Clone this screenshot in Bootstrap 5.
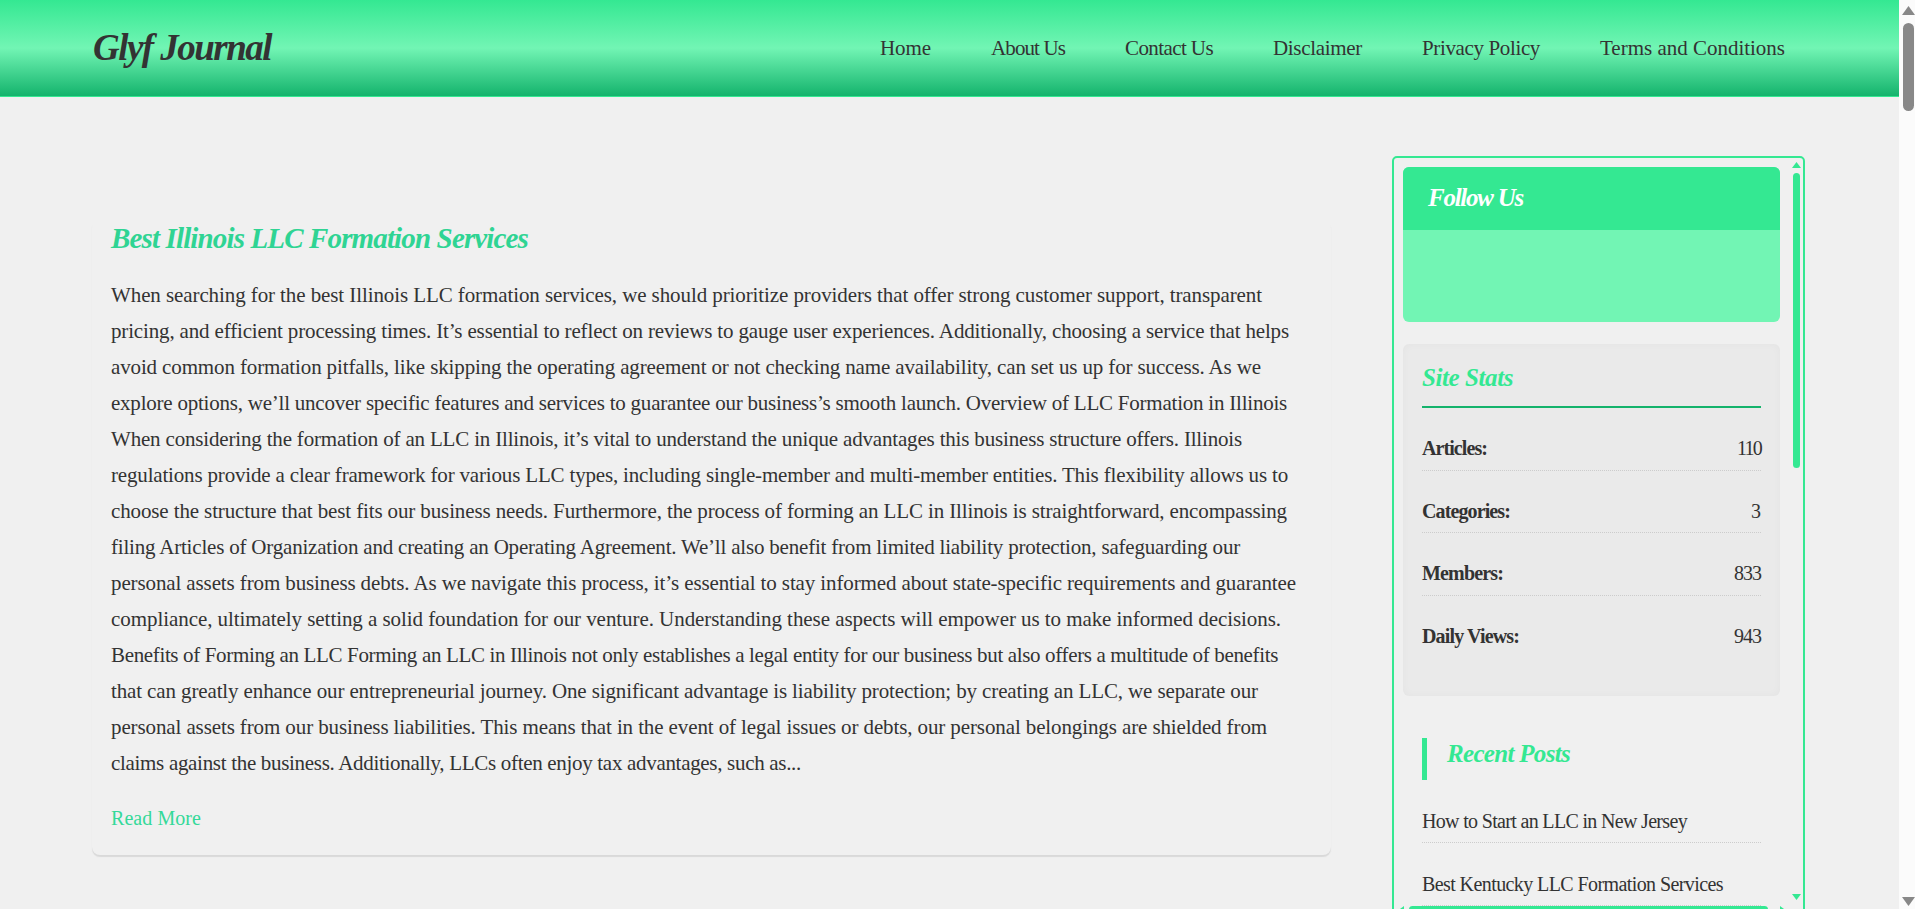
<!DOCTYPE html>
<html>
<head>
    <title>Glyf Journal</title>
    <link rel="stylesheet" href="https://cdn.jsdelivr.net/npm/bootstrap@5.3.0/dist/css/bootstrap.min.css">
    <style>
        html, body { height: 100%; overflow: hidden; }
        body {
            background: #f0f0f0;
            color: #333;
            font-family: "Liberation Serif", serif;
        }
        .fit-text { display: inline-block; white-space: nowrap; }

        /* page scrollbar, drawn because the browser hides the real one */
        .page-bar {
            position: fixed;
            top: 0;
            right: 0;
            bottom: 0;
            width: 16px;
            background: #fbfbfb;
        }
        .page-bar-thumb {
            position: absolute;
            top: 23px;
            right: 1px;
            width: 11px;
            height: 88px;
            background: #888;
            border-radius: 6px;
        }
        .page-bar-up, .page-bar-down { position: absolute; right: 0; display: block; }
        .page-bar-up { top: 6px; }
        .page-bar-down { top: 897px; }

        .site-head {
            height: 97px;
            padding: 0 130px 0 93px;
            background: linear-gradient(#34e892, #72f5b4 50%, #14b36c);
            border-bottom: 1px solid #34e892;
        }
        .site-logo {
            font-size: 37px;
            font-weight: 700;
            font-style: italic;
            color: #333;
            text-decoration: none;
        }
        .head-links { gap: 60px; padding-top: 2px; }
        .head-links a {
            font-size: 21px;
            color: #333;
            text-decoration: none;
        }

        .page-wrap { padding: 59px 95px 0 92px; gap: 61px; }
        .post-col { width: 1239px; padding-top: 64px; }
        .post-item {
            padding: 0 19px 23px;
            border-radius: 8px;
            box-shadow: 0 2px 1px #d9d9d9;
        }
        .post-title {
            font-size: 29px;
            line-height: 36px;
            font-weight: 700;
            font-style: italic;
            color: #2fd493;
            margin-bottom: 21px;
        }
        .post-text {
            font-size: 21px;
            line-height: 36px;
            margin-bottom: 25px;
        }
        .post-line { display: block; white-space: nowrap; width: fit-content; }
        .post-more { font-size: 20px; line-height: 24px; color: #34d999; text-decoration: none; }

        .side-col {
            position: relative;
            width: 413px;
            height: 770px;
            flex: none;
            padding: 9px 0 0 9px;
            overflow: hidden;
            border: 2px solid #34e892;
            border-radius: 5px;
        }
        .side-thumb-y, .side-thumb-x { position: absolute; background: #34e892; border-radius: 4px; }
        .side-thumb-y { left: 399px; top: 15px; width: 7px; height: 295px; }
        .side-thumb-x { left: 15px; top: 748px; width: 359px; height: 7px; }
        .side-arrow { position: absolute; display: block; }

        .follow-box { width: 377px; background: #72f5b4; border-radius: 6px; overflow: hidden; margin-bottom: 22px; }
        .follow-head {
            height: 63px;
            padding: 0 25px;
            line-height: 61px;
            background: #34e892;
            color: #fff;
            font-size: 25px;
            font-weight: 700;
            font-style: italic;
        }
        .follow-body { height: 92px; }

        .stats-box {
            width: 377px;
            height: 352px;
            padding: 18px 19px 0;
            background: #eaeaea;
            border-radius: 6px;
            box-shadow: inset 0 0 8px rgba(0,0,0,.03);
            margin-bottom: 42px;
        }
        .stats-title {
            font-size: 25px;
            line-height: 32px;
            font-weight: 700;
            font-style: italic;
            color: #34e892;
            padding-bottom: 12px;
            margin: 0;
            border-bottom: 2px solid #14b36c;
        }
        .stats-row {
            height: 62.7px;
            padding-top: 24px;
            line-height: 32px;
            font-size: 20px;
            border-bottom: 1px dotted #ccc;
        }
        .stats-row:last-child { border-bottom: 0; }

        .recent-box { width: 377px; padding: 0 19px; }
        .recent-title {
            height: 42px;
            margin: 0 0 25px;
            padding-left: 20px;
            border-left: 5px solid #34e892;
            font-size: 25px;
            line-height: 32px;
            font-weight: 700;
            font-style: italic;
            color: #34e892;
        }
        .recent-row {
            display: block;
            height: 38px;
            margin-bottom: 25px;
            line-height: 32px;
            font-size: 20px;
            color: #333;
            text-decoration: none;
            border-bottom: 1px dotted #ccc;
        }
    </style>
</head>
<body>
    <header class="site-head d-flex align-items-center justify-content-between">
        <a class="site-logo fit-text" data-w="178" href="#">Glyf Journal</a>
        <nav class="head-links d-flex">
            <a class="fit-text" data-w="51" href="#">Home</a>
            <a class="fit-text" data-w="74" href="#">About Us</a>
            <a class="fit-text" data-w="88" href="#">Contact Us</a>
            <a class="fit-text" data-w="89" href="#">Disclaimer</a>
            <a class="fit-text" data-w="118" href="#">Privacy Policy</a>
            <a class="fit-text" data-w="185" href="#">Terms and Conditions</a>
        </nav>
    </header>

    <div class="page-wrap d-flex align-items-start">
        <main class="post-col">
            <article class="post-item">
                <h2 class="post-title"><span class="fit-text" data-w="417">Best Illinois LLC Formation Services</span></h2>
                <p class="post-text">
                    <span class="post-line" data-w="1151">When searching for the best Illinois LLC formation services, we should prioritize providers that offer strong customer support, transparent</span>
                    <span class="post-line" data-w="1178">pricing, and efficient processing times. It’s essential to reflect on reviews to gauge user experiences. Additionally, choosing a service that helps</span>
                    <span class="post-line" data-w="1150">avoid common formation pitfalls, like skipping the operating agreement or not checking name availability, can set us up for success. As we</span>
                    <span class="post-line" data-w="1176">explore options, we’ll uncover specific features and services to guarantee our business’s smooth launch. Overview of LLC Formation in Illinois</span>
                    <span class="post-line" data-w="1131">When considering the formation of an LLC in Illinois, it’s vital to understand the unique advantages this business structure offers. Illinois</span>
                    <span class="post-line" data-w="1177">regulations provide a clear framework for various LLC types, including single-member and multi-member entities. This flexibility allows us to</span>
                    <span class="post-line" data-w="1176">choose the structure that best fits our business needs. Furthermore, the process of forming an LLC in Illinois is straightforward, encompassing</span>
                    <span class="post-line" data-w="1129">filing Articles of Organization and creating an Operating Agreement. We’ll also benefit from limited liability protection, safeguarding our</span>
                    <span class="post-line" data-w="1185">personal assets from business debts. As we navigate this process, it’s essential to stay informed about state-specific requirements and guarantee</span>
                    <span class="post-line" data-w="1170">compliance, ultimately setting a solid foundation for our venture. Understanding these aspects will empower us to make informed decisions.</span>
                    <span class="post-line" data-w="1167">Benefits of Forming an LLC Forming an LLC in Illinois not only establishes a legal entity for our business but also offers a multitude of benefits</span>
                    <span class="post-line" data-w="1147">that can greatly enhance our entrepreneurial journey. One significant advantage is liability protection; by creating an LLC, we separate our</span>
                    <span class="post-line" data-w="1156">personal assets from our business liabilities. This means that in the event of legal issues or debts, our personal belongings are shielded from</span>
                    <span class="post-line" data-w="690">claims against the business. Additionally, LLCs often enjoy tax advantages, such as...</span>
                </p>
                <a class="post-more fit-text" data-w="90" href="#">Read More</a>
            </article>
        </main>

        <aside class="side-col">
            <section class="follow-box">
                <div class="follow-head"><span class="fit-text" data-w="95">Follow Us</span></div>
                <div class="follow-body"></div>
            </section>
            <section class="stats-box">
                <h3 class="stats-title"><span class="fit-text" data-w="91">Site Stats</span></h3>
                <div class="stats-row d-flex justify-content-between"><b class="fit-text" data-w="65">Articles:</b><span class="fit-text" data-w="24">110</span></div>
                <div class="stats-row d-flex justify-content-between"><b class="fit-text" data-w="88">Categories:</b><span>3</span></div>
                <div class="stats-row d-flex justify-content-between"><b class="fit-text" data-w="81">Members:</b><span class="fit-text" data-w="27">833</span></div>
                <div class="stats-row d-flex justify-content-between"><b class="fit-text" data-w="97">Daily Views:</b><span class="fit-text" data-w="27">943</span></div>
            </section>
            <section class="recent-box">
                <div class="recent-title"><span class="fit-text" data-w="123">Recent Posts</span></div>
                <a class="recent-row" href="#"><span class="fit-text" data-w="265">How to Start an LLC in New Jersey</span></a>
                <a class="recent-row" href="#"><span class="fit-text" data-w="301">Best Kentucky LLC Formation Services</span></a>
            </section>

            <!-- scrollbars of the sidebar -->
            <div class="side-thumb-y"></div>
            <div class="side-thumb-x"></div>
            <svg class="side-arrow" style="left:398px;top:4px" width="9" height="6"><path d="M4.5 0L9 6H0z" fill="#34e892"/></svg>
            <svg class="side-arrow" style="left:398px;top:736px" width="9" height="6"><path d="M0 0H9L4.5 6z" fill="#34e892"/></svg>
            <svg class="side-arrow" style="left:4px;top:748px" width="6" height="9"><path d="M0 4.5L6 0V9z" fill="#34e892"/></svg>
            <svg class="side-arrow" style="left:386px;top:748px" width="6" height="9"><path d="M0 0L6 4.5L0 9z" fill="#34e892"/></svg>
        </aside>
    </div>

    <div class="page-bar">
        <svg class="page-bar-up" width="13" height="9"><path d="M6.5 0L13 9H0z" fill="#888"/></svg>
        <div class="page-bar-thumb"></div>
        <svg class="page-bar-down" width="13" height="9"><path d="M0 0H13L6.5 9z" fill="#888"/></svg>
    </div>
    <script src="https://cdn.jsdelivr.net/npm/bootstrap@5.3.0/dist/js/bootstrap.bundle.min.js"></script>
    <script>
        // squeeze each text to its measured width, the page font runs narrower than ours
        document.querySelectorAll('[data-w]').forEach(function (el) {
            var extra = Number(el.dataset.w) - el.getBoundingClientRect().width;
            el.style.letterSpacing = (extra / el.textContent.length) + 'px';
        });
    </script>
</body>
</html>
